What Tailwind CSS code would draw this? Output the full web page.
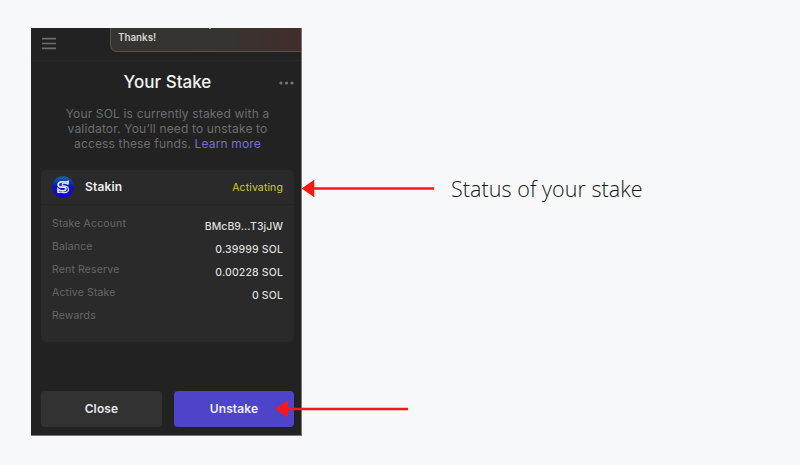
<!DOCTYPE html>
<html lang="en">
<head>
<meta charset="utf-8">
<title>Your Stake</title>
<script src="https://cdn.jsdelivr.net/npm/@tailwindcss/browser@4"></script>
</head>
<body class="bg-[#f7f8fa]">
<main class="relative h-[465px] w-[800px] overflow-hidden pl-[31px] pt-7 font-['Inter',sans-serif]">
  <section class="flex h-[408px] w-[271px] flex-col overflow-hidden border-r border-b border-[#777] bg-[#222222]">
    <header class="flex h-[33px] shrink-0 items-start justify-between border-b border-[#292929] pl-[11px]">
      <svg class="mt-[9px] h-[13px] w-[14px]" viewBox="0 0 14 13" fill="none" stroke="#6e6e6e" stroke-width="1.6"><path d="M0 1.6H14M0 6.5H14M0 11.4H14"/></svg>
      <div class="relative -mr-[9px] h-6 w-[200px] rounded-bl-[7px] border-b border-l border-[#55534e] bg-linear-to-r from-[#353430] from-55% to-[#432c2b] pl-[7px] text-[9.8px] leading-[20px] font-semibold text-[#d4d4d2]">Thanks!<i class="absolute top-0 left-[98px] h-px w-[2px] bg-[#99958e]"></i></div>
    </header>
    <div class="relative h-[43px] shrink-0 text-center">
      <h1 class="pl-[3px] text-[17px] leading-[43px] font-medium tracking-[0.02px] text-[#f2f2f2]">Your Stake</h1>
      <svg class="absolute top-[20px] right-[7.5px] h-[4px] w-[15px]" viewBox="0 0 15 4" fill="#777"><circle cx="2" cy="2" r="1.6"/><circle cx="7.5" cy="2" r="1.6"/><circle cx="13" cy="2" r="1.6"/></svg>
    </div>
    <p class="mt-[2px] h-[46px] shrink-0 pl-[3px] text-center text-[12px] leading-[15.2px] tracking-[0.16px] whitespace-nowrap text-[#6d6d6d]">Your SOL is currently staked with a<br>validator. You’ll need to unstake to<br>access these funds. <a class="text-[#7b6cdb]">Learn more</a></p>
    <article class="mt-[18px] ml-[10px] h-[172px] w-[253px] shrink-0 rounded-[5px] bg-[#2a2a2a]">
      <div class="flex h-[35px] items-center border-b border-[#242424] pr-[11px] pl-[10.5px]">
        <svg class="h-[22px] w-[22px]" viewBox="0 0 22 22"><defs><linearGradient id="logo" x2="0" y2="1"><stop stop-color="#1669a8"/><stop offset=".45" stop-color="#0b17b9"/><stop offset="1" stop-color="#1600df"/></linearGradient></defs><circle cx="11" cy="11" r="10.8" fill="url(#logo)"/><g fill="none" stroke="#dce4ff"><path stroke-width="1.7" d="M16 8.6V5.6C13.8 6.7 11.5 5.4 9.2 5.9C4.8 6.9 5.2 10.9 9.3 11.2H12.3C14.5 11.5 14.4 14.6 11.5 14.8C9 14.9 7.2 14.2 6 13V16.7"/><path stroke-width="1.2" d="M15.7 8.3C13 6.3 9.6 7 10.2 9.1C10.8 10.2 14.5 9.3 16 11.5C17.6 14.5 15.2 17 11.5 16.6C9.5 16.3 8 15.6 6 16.7"/></g></svg>
        <h2 class="ml-[11.5px] text-[12px] font-semibold tracking-[0.15px] text-[#eeeeee]">Stakin</h2>
        <span class="ml-auto pt-[2px] text-[10.5px] tracking-[0.12px] text-[#d1c83f]">Activating</span>
      </div>
      <div class="flex justify-between pr-[11px] pl-[11px] text-[10.5px] leading-[23px]">
        <dl class="pt-[7px] tracking-[0.15px] text-[#666]"><dt>Stake Account</dt><dt>Balance</dt><dt>Rent Reserve</dt><dt>Active Stake</dt><dt>Rewards</dt></dl>
        <div class="pt-[10px] text-right font-medium tracking-[0.15px] text-[#dedede]"><p class="tracking-[0.05px]">BMcB9...T3jJW</p><p>0.39999 SOL</p><p>0.00228 SOL</p><p>0 SOL</p></div>
      </div>
    </article>
    <footer class="mt-[49px] flex shrink-0 gap-[12px] pl-[10px] text-[12px] font-semibold tracking-[0.15px]">
      <button class="h-9 w-[121px] rounded-[4px] bg-[#323232] text-[#e6e6e6]">Close</button>
      <button class="h-9 w-[120px] rounded-[4px] bg-[#4e44ca] text-[#eeecff]">Unstake</button>
    </footer>
  </section>
  <svg class="absolute inset-0 h-[465px] w-[800px]" viewBox="0 0 800 465" fill="#ff1616"><path d="M301.5 188.5L314.3 179.8V187.2H434V189.8H314.3V197.2ZM275.2 409L288 400.5V407.7H408V410.3H288V417.5Z"/></svg>
  <p class="absolute top-[174px] left-[451px] font-['Open_Sans',sans-serif] text-[21.5px] leading-[30px] font-light tracking-[0.06px] whitespace-nowrap text-[#151515]">Status of your stake</p>
</main>
</body>
</html>
